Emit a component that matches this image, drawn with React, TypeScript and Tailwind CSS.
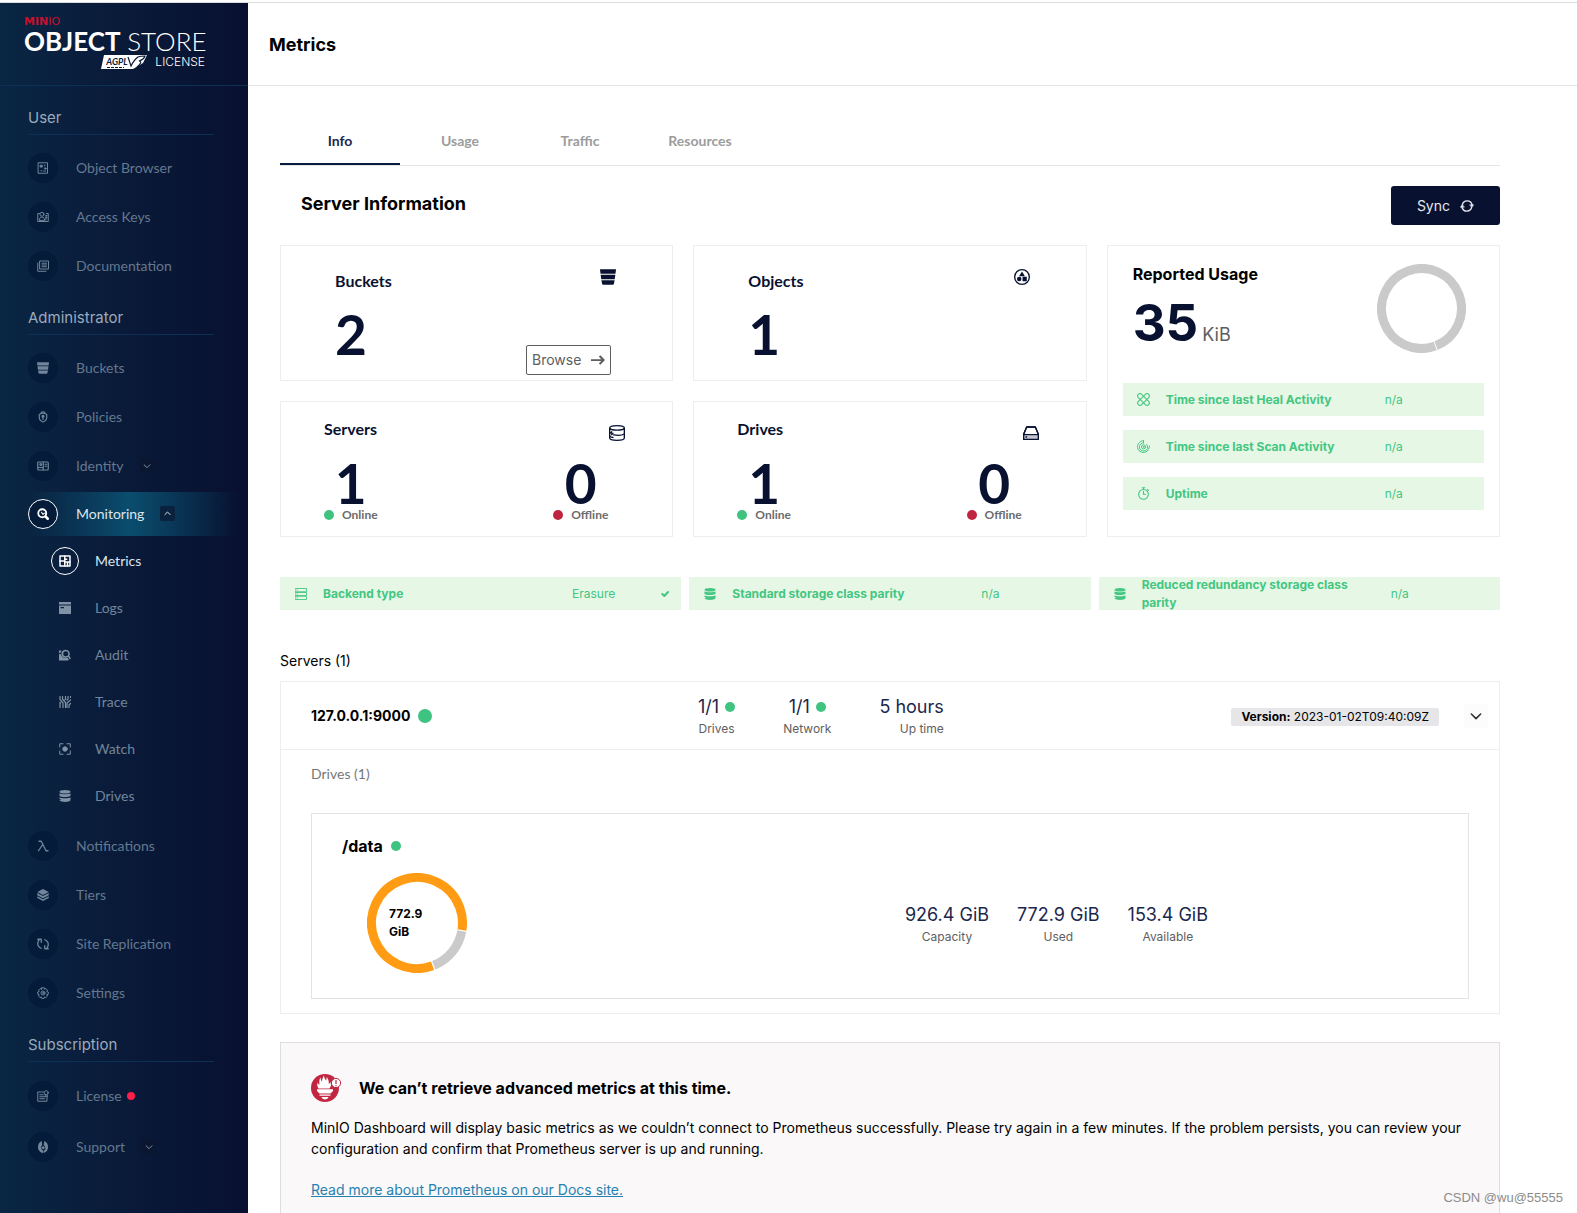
import React from "react";

type IconProps = { className?: string };
type Drawing = (p: IconProps) => React.ReactElement;

const solid = (children: React.ReactNode): Drawing =>
  function SolidIcon({ className }) {
    return (
      <svg viewBox="0 0 24 24" fill="currentColor" aria-hidden="true" className={className}>
        {children}
      </svg>
    );
  };

const line = (children: React.ReactNode, width = 2): Drawing =>
  function LineIcon({ className }) {
    return (
      <svg
        viewBox="0 0 24 24"
        fill="none"
        stroke="currentColor"
        strokeWidth={width}
        strokeLinecap="round"
        strokeLinejoin="round"
        aria-hidden="true"
        className={className}
      >
        {children}
      </svg>
    );
  };

const ObjectBrowserIcon = line(
  <>
    <rect x="3" y="1.5" width="18" height="21" />
    <rect x="7" y="6.5" width="3.6" height="3.6" fill="currentColor" />
    <circle cx="16.5" cy="13" r="1.6" fill="currentColor" />
    <path d="M15.5 6v2M8 17.5h2M13.5 18h3.5" />
  </>,
);
const AccessKeysIcon = line(
  <>
    <path d="M5 5H1.5v16h21V5H19" />
    <circle cx="10" cy="6.5" r="4" />
    <path d="M4.5 18c.4-4 2.800-6 5.500-6s5 2 5.500 6z" />
    <path d="M18 9v9M18 9h2M18 13h2" />
  </>,
);
const DocumentationIcon = line(
  <>
    <rect x="6" y="2" width="17" height="16" />
    <path d="M1.500 6v16.500H18M10 6.500h9M10 10h9M10 13.500h9" />
  </>,
);
const BucketIcon = solid(
  <>
    <path d="M0 .5h24l-.8 6.700H.8z" />
    <path d="M1 8.700h22l-.9 6.600H1.900z" />
    <path d="M2.100 16.800h19.800l-1 5.200c-.2 1-.8 1.500-1.800 1.500H4.900c-1 0-1.600-.5-1.800-1.500z" />
  </>,
);
const PoliciesIcon = line(
  <>
    <path d="M8 4.500C8 1 16 1 16 4.500" />
    <path d="M12 4.500c3 0 5 .8 7.500 2.300v6.200c0 4-2.500 7-7.500 9-5-2-7.500-5-7.500-9V6.800C7 5.300 9 4.500 12 4.500z" />
    <circle cx="12" cy="10.500" r="2" fill="currentColor" />
    <path d="M12 12v5" />
  </>,
  2.4,
);
const IdentityIcon = line(
  <>
    <rect x="1.500" y="4" width="21" height="16" rx="2" />
    <circle cx="7.500" cy="9" r="1.800" />
    <path d="M3 15h9M12.500 4v16M16 8.500h3.500M16 12.500h3.500" />
  </>,
  2.4,
);
const MonitoringIcon = line(
  <>
    <circle cx="10.500" cy="10.500" r="8" />
    <path d="M17 17l4.500 4.500" strokeWidth="5" />
    <path d="M9 8.500l3 4.500 2-2.500h4" strokeWidth="2.200" />
  </>,
  3.6,
);
const MetricsIcon = line(
  <>
    <rect x="2" y="2" width="20" height="20" />
    <path d="M11.500 2v20M2 12h9.500M11.500 14H22M17 14v8M11.500 8.500h4" />
  </>,
  3,
);
const LogsIcon = solid(
  <>
    <path d="M0 0h24v5H0z" />
    <path fillRule="evenodd" d="M0 7h24v17H0zM3 10v2.500h7V10z" />
  </>,
);
const AuditIcon = solid(
  <>
    <path fillRule="evenodd" d="M13.500 1.500a8 8 0 0 1 7 12l3.500 5.500-2.500 1.500-3.500-5a8 8 0 1 1-4.500-14zm0 3a5 5 0 1 0 0 10 5 5 0 0 0 0-10z" />
    <path d="M0 3h4.500v3H3v2H0zM0 10h3.500c.5 3.500 3 6.500 6.500 7.500 2.500.7 5 .4 7-.6l3 4.600-2 1.500H0z" />
  </>,
);
const TraceIcon = line(
  <path d="M2 1v6l6 7v9M2 13v10M2 13l1 1M7 1v5l6 7v10M13 1v5M13 6l-1 1M18 1v5l-2 2M23 1v2M23 8l-7 6v9M23 15l-3 3v5" />,
  2.4,
);
const WatchIcon = line(
  <>
    <path d="M1.500 8V1.500H8M16 1.500h6.500V8M22.500 16v6.500H16M8 22.500H1.500V16" />
    <circle cx="12" cy="12" r="4.500" fill="currentColor" />
  </>,
);
const DrivesIcon = solid(
  <>
    <ellipse cx="12" cy="3.500" rx="11" ry="3.500" />
    <path d="M1 6.500c3 2.500 19 2.500 22 0v5c-2 2.500-14 3.500-18 1.800L1 12z" />
    <path d="M1 14.500c3 2.500 19 2.500 22 0v6c-2 4.500-20 4.500-22 0l4-.8-4-1.700z" />
  </>,
);
const LambdaIcon = line(
  <path d="M4 2.500h4.500L18 21.500h4M11.500 9L3 21.500" />,
  2.6,
);
const TiersIcon = solid(
  <>
    <path d="M12 0l11.500 6L12 12 .5 6z" />
    <path d="M.5 8L12 14l11.500-6v4.500L12 18.500.5 12.500z" />
    <path d="M.5 14.500l11.500 6 11.500-6v3.500L12 24 .5 18z" />
  </>,
);
const ReplicationIcon = line(
  <>
    <path d="M8.500 20.500C3.500 18.500 1.500 15 1.500 11c0-2.500 1-5.500 3-7.500" />
    <path d="M1.500 2.500h7v6" />
    <path d="M15.500 3.500c5 2 7 5.500 7 9.500 0 2.500-1 5.500-3 7.500" />
    <path d="M22.500 21.500h-7v-6" />
  </>,
  2.6,
);
const SettingsIcon = line(
  <>
    <path d="M9.500 1.500h5l.8 3 2.700-1.300 3 3.300-1.500 2.500 3 1v4.500l-3 .8 1.300 3-3.300 3-2.500-1.500-1 3h-4.500l-.8-3-2.700 1.500-3-3.500 1.500-2.500-3-1V10l3-.8L3 6.500l3.300-3.300 2.500 1.500z" />
    <circle cx="12" cy="12" r="4" />
    <circle cx="12" cy="12" r="1" />
  </>,
);
const LicenseIcon = line(
  <>
    <path d="M13 4H1.500v18.500H20V13" />
    <path d="M5.500 9.500h7M5.500 13.500h10M5.500 17.500h10" />
    <circle cx="18.500" cy="5.500" r="4" />
    <path d="M16.500 9.500v4l2-1.300 2 1.300v-4" />
  </>,
);
const SupportIcon = solid(
  <>
    <path d="M9.500 0l1 8L8 11l1.500 6 3 2v5C5 22.500 2 18 2 12 2 6.500 4.500 2 9.500 0z" />
    <path d="M14.500 0C19.500 2 22 6.500 22 12c0 6-2.500 10-8.500 12v-4l3.500-4-1-5-2.500-3z" />
    <circle cx="12.500" cy="13.500" r="2.800" />
  </>,
);
const ChevronDown = line(<path d="M5 9l7 7 7-7" />, 2.4);
const ChevronUp = line(<path d="M5 15l7-7 7 7" />, 2.6);
const ArrowRight = solid(<path d="M0 10.500h17.500l-4-4.500 2.500-2 8 8-8 8-2.500-2 4-4.500H0z" />);
const SyncIcon = line(
  <>
    <path d="M4 10a8.500 8.500 0 0 1 16.500-.5M20 14a8.500 8.500 0 0 1-16.500.5" />
    <path d="M17 10h6.500l-3.200 4zM7 14H.5l3.200-4z" fill="currentColor" strokeWidth="1" />
  </>,
  2.4,
);
const ObjectsIcon = solid(
  <>
    <path fillRule="evenodd" d="M12 0a12 12 0 1 1 0 24 12 12 0 0 1 0-24zm0 2a10 10 0 1 0 0 20 10 10 0 0 0 0-20z" />
    <path d="M12 3.800l4.400 7.200H7.600z" />
    <circle cx="7.800" cy="15" r="3.400" />
    <path d="M12.800 11.800h6.400v6.400h-6.400z" />
  </>,
);
const ServersIcon = line(
  <>
    <path d="M12 1c6 0 11 1 11 3.500v15c0 2.500-5 3.500-11 3.500S1 22 1 19.500v-15C1 2 6 1 12 1z" />
    <path d="M1 5c1 2 5.500 2.600 11 2.600S22 7 23 5M6 12.500c-2 0-4-.5-5-1.500M6 12.500l-2 2M7 14.800c6 1 13 .5 16-1.300M1 16.500c1 1.500 3 2 5 2.200M4 10v.5" />
  </>,
  2,
);
const DiskIcon = line(
  <>
    <path d="M5.500 3h13L23 14v7.500H1V14z" />
    <path d="M2 18h20" strokeWidth="5" stroke="#c3c6d0" />
    <path d="M5.500 3h13L23 14v7.500H1V14zM1 14.500h22M4.500 18h1" />
  </>,
);
const HealIcon = line(
  <>
    <path d="M8.500 2.500l13 13a4.200 4.200 0 0 1-6 6l-13-13a4.200 4.200 0 0 1 6-6z" />
    <path d="M15.500 2.500l-13 13a4.200 4.200 0 0 0 6 6l13-13a4.200 4.200 0 0 0-6-6z" />
  </>,
);
const ScanIcon = line(
  <>
    <path d="M12 1.200A11 11 0 1 0 20.500 19M22.800 11c.2 2.500-.3 4.500-1.300 6M12 1.200v4" />
    <path d="M12 5.200a7.500 7.500 0 1 0 7.500 7.500c0-1.700-.5-3.200-1.500-4.500" />
    <circle cx="12" cy="12.700" r="3.800" />
    <circle cx="12" cy="12.700" r=".8" />
  </>,
  1.8,
);
const UptimeIcon = line(
  <>
    <circle cx="12" cy="13.500" r="9" />
    <path d="M12 8v5.500M12 13.500h4M9.500 1.500h5M12 1.500v3M19 4.500l2 2" />
  </>,
);
const BackendIcon = line(
  <>
    <rect x="1" y="1" width="22" height="6.500" />
    <rect x="1" y="9" width="22" height="6" />
    <rect x="1" y="16.500" width="22" height="6.500" />
    <path d="M4 4.200h1M4 12h1M4 19.800h1" />
  </>,
  1.8,
);
const CheckIcon = line(<path d="M4 12l6 6L21 6" />, 6);
const PrometheusIcon: Drawing = ({ className }) => (
  <svg viewBox="0 0 30 28" aria-hidden="true" className={className}>
    <circle cx="14" cy="14" r="14" fill="#c22742" />
    <g fill="#fff">
      <path d="M7.500 14.500C6 12 6 10 6.500 8.500c.5 1.500 1.500 2.200 2 2C8 7 8.500 5 9.500 3.500c.2 2 .8 3.500 1.500 4C11.200 4.500 12 3 13 1.500c0 2 1 3.500 2 5 .5-1 .7-2 .5-3.500 2 2 2.500 4.500 2.300 7 .7-.3 1.200-1 1.500-2 1.200 2.500.7 4.500-.8 6.500z" />
      <path d="M6 15.300h16v1.700l-2.500 2.500h-11L6 17z" />
      <path d="M8.500 20.500h11v1.200h-11zM10.500 23h7c-.5 1.500-1.700 2.500-3.500 2.500S11 24.500 10.500 23z" />
    </g>
    <circle cx="25" cy="9" r="4.600" fill="#fff" stroke="#c22742" strokeWidth="1" />
    <path d="M25 6v4M25 11.200v1" stroke="#c22742" strokeWidth="1.200" />
  </svg>
);

type NavEntry = {
  label: string;
  icon: Drawing;
  toggle?: boolean;
  badge?: boolean;
};

const userNav: NavEntry[] = [
  { label: "Object Browser", icon: ObjectBrowserIcon },
  { label: "Access Keys", icon: AccessKeysIcon },
  { label: "Documentation", icon: DocumentationIcon },
];
const adminNavTop: NavEntry[] = [
  { label: "Buckets", icon: BucketIcon },
  { label: "Policies", icon: PoliciesIcon },
  { label: "Identity", icon: IdentityIcon, toggle: true },
];
const monitoringNav: NavEntry[] = [
  { label: "Metrics", icon: MetricsIcon },
  { label: "Logs", icon: LogsIcon },
  { label: "Audit", icon: AuditIcon },
  { label: "Trace", icon: TraceIcon },
  { label: "Watch", icon: WatchIcon },
  { label: "Drives", icon: DrivesIcon },
];
const adminNavBottom: NavEntry[] = [
  { label: "Notifications", icon: LambdaIcon },
  { label: "Tiers", icon: TiersIcon },
  { label: "Site Replication", icon: ReplicationIcon },
  { label: "Settings", icon: SettingsIcon },
];
const subscriptionNav: NavEntry[] = [
  { label: "License", icon: LicenseIcon, badge: true },
  { label: "Support", icon: SupportIcon, toggle: true },
];

function NavItem({ item, tall }: { item: NavEntry; tall?: boolean }) {
  const Icon = item.icon;
  const body = (
    <>
      <span className="flex size-[30px] items-center justify-center rounded-full bg-[#041b3a] text-[#71869a]">
        <Icon className="size-3" />
      </span>
      <span className="ml-[18px]">{item.label}</span>
      {item.badge && <span className="ml-[5px] size-2 rounded-full bg-[#ff1f4b]" />}
      {item.toggle && (
        <span className="ml-4 flex size-[15px] items-center justify-center rounded-xs bg-[#0b1630] text-[#8092a5]">
          <ChevronDown className="size-[10px]" />
        </span>
      )}
    </>
  );
  return (
    <li className={tall ? "flex h-[51px]" : "flex h-[49px]"}>
      {item.toggle ? (
        <button type="button" aria-expanded="false" className="flex flex-1 items-center text-left">
          {body}
        </button>
      ) : (
        <a href="#" className="flex flex-1 items-center">
          {body}
        </a>
      )}
    </li>
  );
}

function NavHeading({ children }: { children: React.ReactNode }) {
  return (
    <h2 className="mr-[34px] mb-2 flex h-[45px] items-center border-b border-[#0d3056] pt-3 font-['Inter'] text-[15px] text-[#9aaabc]">
      {children}
    </h2>
  );
}

function Logo() {
  return (
    <div className="flex w-[181px] flex-col font-['Lato'] text-white">
      <span className="font-['DejaVu_Sans'] text-[11px] leading-[10px] text-[#c8102e]">
        <b>MIN</b>IO
      </span>
      <span className="text-[26px] leading-7 whitespace-nowrap">
        <b className="font-bold">OBJECT</b> <span className="font-light">STORE</span>
      </span>
      <span className="flex items-center justify-end gap-2">
        <span className="relative flex h-[14px] w-[46px] items-center">
          <svg viewBox="0 0 46 14" className="absolute inset-0 size-full" aria-hidden="true">
            <path d="M3 0h43l-4 8-10 6H0z" fill="#fff" />
            <path d="M27 2c1 3 2 6 3 9 2-4 4-7 7-9 2-1 5-1 7-1-1 3-3 4-6 5 3 0 2 3-2 6" fill="none" stroke="#0a1b3a" strokeWidth="1.200" />
            <path d="M6 12.500h17" stroke="#0a1b3a" strokeWidth="1" strokeDasharray="3 1" />
          </svg>
          <span className="relative pl-[5px] text-[9px] leading-[10px] font-bold text-[#0a1b3a] italic">AGPL</span>
        </span>
        <span className="font-['Inter'] text-xs leading-[14px] font-light">LICENSE</span>
      </span>
    </div>
  );
}

function Sidebar() {
  return (
    <aside className="flex w-[248px] shrink-0 flex-col bg-[linear-gradient(90deg,#092643_0%,#0a1b3a_45%,#081030_100%)] font-['Lato'] text-[14px] text-[#64788e]">
      <div className="flex h-[83px] shrink-0 items-start border-b border-[#0d3056] pt-[14px] pl-6">
        <Logo />
      </div>
      <nav aria-label="Console" className="flex flex-col pt-1 pl-7">
        <NavHeading>User</NavHeading>
        <ul>
          {userNav.map((item) => (
            <NavItem key={item.label} item={item} />
          ))}
        </ul>
        <NavHeading>Administrator</NavHeading>
        <ul>
          {adminNavTop.map((item) => (
            <NavItem key={item.label} item={item} />
          ))}
          <li className="flex flex-col pb-[2px]">
            <div className="flex h-[47px] items-center pr-[10px]">
              <button
                type="button"
                aria-expanded="true"
                className="flex h-11 flex-1 items-center bg-[linear-gradient(90deg,transparent,#0a4d6e_48%,transparent)] text-left text-[#dde5ec]"
              >
                <span className="flex size-[30px] items-center justify-center rounded-full border border-white bg-[#041b3a] text-white">
                  <MonitoringIcon className="size-3" />
                </span>
                <span className="ml-[18px]">Monitoring</span>
                <span className="ml-4 flex size-[15px] items-center justify-center rounded-xs bg-[#0b223f]">
                  <ChevronUp className="size-[9px]" />
                </span>
              </button>
            </div>
            <ul className="pl-[23px]">
              {monitoringNav.map(({ label, icon: Icon }, i) => (
                <li key={label} className="flex h-[47px]">
                  <a
                    href="#"
                    aria-current={i === 0 ? "page" : undefined}
                    className={i === 0 ? "flex flex-1 items-center text-[#dde5ec]" : "flex flex-1 items-center text-[#71869a]"}
                  >
                    <span
                      className={
                        i === 0
                          ? "flex size-7 items-center justify-center rounded-full border border-white text-white"
                          : "flex size-7 items-center justify-center text-[#8092a5]"
                      }
                    >
                      <Icon className="size-3" />
                    </span>
                    <span className="ml-4">{label}</span>
                  </a>
                </li>
              ))}
            </ul>
          </li>
          {adminNavBottom.map((item) => (
            <NavItem key={item.label} item={item} />
          ))}
        </ul>
        <NavHeading>Subscription</NavHeading>
        <ul>
          {subscriptionNav.map((item) => (
            <NavItem key={item.label} item={item} tall />
          ))}
        </ul>
      </nav>
    </aside>
  );
}

function Dot({ color = "green" }: { color?: "green" | "red" }) {
  return (
    <span
      className={
        color === "green"
          ? "size-[10px] shrink-0 rounded-full bg-[#3fc380]"
          : "size-[10px] shrink-0 rounded-full bg-[#bf2541]"
      }
    />
  );
}

function CountCard({ title, value, icon: Icon, action }: { title: string; value: string; icon: Drawing; action?: React.ReactNode }) {
  return (
    <section className="flex min-h-[136px] justify-between border border-[#eeeeee] pr-14 pl-[54px] text-[#081130]">
      <div className="flex flex-col pt-[23px]">
        <h3 className="font-['Lato'] text-base leading-6 font-bold">{title}</h3>
        <p className="mt-[13px] font-['Lato'] text-[55px] leading-[56px] font-bold">{value}</p>
      </div>
      <div className="flex flex-col items-end justify-between pt-[23px] pb-[5px]">
        <Icon className="size-4" />
        {action}
      </div>
    </section>
  );
}

function StateCard({ title, online, offline, icon: Icon }: { title: string; online: string; offline: string; icon: Drawing }) {
  return (
    <section className="flex min-h-[136px] flex-col border border-[#eeeeee] pt-[15px] pl-[43px] font-['Lato'] text-[#081130]">
      <div className="flex justify-between pr-[47px]">
        <h3 className="text-base leading-6 font-bold">{title}</h3>
        <Icon className="mt-2 size-4" />
      </div>
      <div className="mt-[18px] flex justify-between pr-16">
        <p className="flex flex-col items-center">
          <span className="text-[55px] leading-[48px] font-bold">{online}</span>
          <span className="flex items-center gap-2 text-xs leading-4 font-bold text-[#6b6b6b]">
            <Dot /> Online
          </span>
        </p>
        <p className="flex flex-col items-center">
          <span className="text-[55px] leading-[48px] font-bold">{offline}</span>
          <span className="flex items-center gap-2 text-xs leading-4 font-bold text-[#6b6b6b]">
            <Dot color="red" /> Offline
          </span>
        </p>
      </div>
    </section>
  );
}

function ActivityRow({ icon: Icon, label }: { icon: Drawing; label: string }) {
  return (
    <li className="flex h-[33px] items-center bg-[#e6f7e6] pl-[14px] text-xs text-[#43c681]">
      <Icon className="size-[13px]" />
      <b className="ml-4 w-[219px]">{label}</b>
      <span>n/a</span>
    </li>
  );
}

function BackendRow({ icon: Icon, label, value, ok }: { icon: Drawing; label: string; value: string; ok?: boolean }) {
  return (
    <li className="flex h-[33px] items-center bg-[#e6f7e6] pr-3 pl-[15px] text-xs leading-[18px] text-[#43c681]">
      <Icon className="size-3 shrink-0" />
      <b className="ml-4 w-[249px] pr-8">{label}</b>
      <span className="flex-1">{value}</span>
      {ok && <CheckIcon className="size-2" />}
    </li>
  );
}

function Stat({ value, label, dot, end }: { value: string; label: string; dot?: boolean; end?: boolean }) {
  return (
    <div className={end ? "flex flex-col items-end" : "flex flex-col items-center"}>
      <span className="flex items-center gap-[6px] text-lg leading-6 text-[#1c274c]">
        {value}
        {dot && <Dot />}
      </span>
      <span className="text-xs leading-5 text-[#5e5e5e]">{label}</span>
    </div>
  );
}

const RING_START = 70;

function Ring({ size, slices }: { size: number; slices: { share: number; color: string }[] }) {
  const c = size / 2;
  const r = c - 4.5;
  const length = 2 * Math.PI * r;
  let offset = 0;
  return (
    <svg viewBox={`0 0 ${size} ${size}`} width={size} height={size} aria-hidden="true">
      {slices.map(({ share, color }, i) => {
        const dash = share * length - 1.4;
        const start = RING_START + offset * 360;
        offset += share;
        return (
          <circle
            key={i}
            cx={c}
            cy={c}
            r={r}
            fill="none"
            stroke={color}
            strokeWidth="9"
            strokeDasharray={`${dash} ${length - dash}`}
            transform={`rotate(${start} ${c} ${c})`}
          />
        );
      })}
    </svg>
  );
}

const tabs = ["Info", "Usage", "Traffic", "Resources"];

export default function App() {
  return (
    <div className="relative flex h-screen flex-col overflow-hidden bg-white font-['Inter',sans-serif] text-black">
      <div className="h-[3px] shrink-0 border-b border-[#dcdcdc]" />
      <div className="flex min-h-0 flex-1">
        <Sidebar />
        <div className="flex min-w-0 flex-1 flex-col">
          <header className="flex h-[83px] shrink-0 items-center border-b border-[#e5e5e5] pt-[2px] pl-[21px]">
            <h1 className="text-lg font-bold">Metrics</h1>
          </header>
          <main className="min-h-0 flex-1 overflow-hidden pt-[33px] pr-[77px] pl-8">
            <div role="tablist" aria-label="Metrics" className="flex h-[47px] border-b border-[#e5e5e5] font-['Lato'] text-sm font-bold">
              {tabs.map((tab, i) => (
                <button
                  key={tab}
                  type="button"
                  role="tab"
                  aria-selected={i === 0}
                  className={
                    i === 0
                      ? "h-[46px] w-[120px] border-b-2 border-[#081c42] text-[#1c274c]"
                      : "h-[46px] w-[120px] border-b-2 border-transparent text-[#9c9c9c]"
                  }
                >
                  {tab}
                </button>
              ))}
            </div>

            <div className="mt-5 mb-5 flex items-start justify-between pl-[21px]">
              <h2 className="text-lg leading-9 font-bold">Server Information</h2>
              <button type="button" className="flex h-[39px] items-center gap-[10px] rounded-[3px] bg-[#081130] px-[26px] text-sm text-[#e6e8ee]">
                Sync
                <SyncIcon className="size-[14px]" />
              </button>
            </div>

            <div className="grid grid-cols-3 gap-5">
              <CountCard
                title="Buckets"
                value="2"
                icon={BucketIcon}
                action={
                  <button type="button" className="mr-[5px] flex h-[30px] items-center gap-[10px] rounded-[2px] border border-[#5e5e5e] px-[5px] text-sm text-[#5e5e5e]">
                    Browse
                    <ArrowRight className="size-[14px]" />
                  </button>
                }
              />
              <CountCard title="Objects" value="1" icon={ObjectsIcon} />
              <section className="row-span-2 flex flex-col border border-[#eeeeee] px-[15px] pt-4">
                <div className="flex items-start justify-between pr-[18px] pl-[10px]">
                  <div>
                    <h3 className="text-base leading-6 font-bold">Reported Usage</h3>
                    <p className="mt-[5px] flex items-baseline gap-1 leading-[64px]">
                      <b className="text-[51px] text-[#081130]">35</b>
                      <span className="text-lg leading-6 text-[#5e5e5e]">KiB</span>
                    </p>
                  </div>
                  <div className="pt-[2px]">
                    <Ring size={89} slices={[{ share: 1, color: "#cacaca" }]} />
                  </div>
                </div>
                <ul className="mt-7 flex flex-col gap-[14px]">
                  <ActivityRow icon={HealIcon} label="Time since last Heal Activity" />
                  <ActivityRow icon={ScanIcon} label="Time since last Scan Activity" />
                  <ActivityRow icon={UptimeIcon} label="Uptime" />
                </ul>
              </section>
              <StateCard title="Servers" online="1" offline="0" icon={ServersIcon} />
              <StateCard title="Drives" online="1" offline="0" icon={DiskIcon} />
            </div>

            <ul className="mt-10 grid grid-cols-3 gap-2">
              <BackendRow icon={BackendIcon} label="Backend type" value="Erasure" ok />
              <BackendRow icon={DrivesIcon} label="Standard storage class parity" value="n/a" />
              <BackendRow icon={DrivesIcon} label="Reduced redundancy storage class parity" value="n/a" />
            </ul>

            <h2 className="mt-[41px] text-sm leading-5">Servers (1)</h2>
            <section className="mt-[10px] border border-[#eeeeee]">
              <div className="flex h-[68px] items-center border-b border-[#eeeeee] pr-[11px] pl-[30px]">
                <h3 className="flex w-[387px] items-center gap-2 text-sm font-bold">
                  127.0.0.1:9000 <span className="size-[14px] rounded-full bg-[#3fc380]" />
                </h3>
                <div className="flex flex-1 gap-12 pt-[2px]">
                  <Stat value="1/1" label="Drives" dot />
                  <Stat value="1/1" label="Network" dot />
                  <Stat value="5 hours" label="Up time" end />
                </div>
                <p className="mt-[3px] rounded-xs bg-[#e6e6e8] px-[10px] text-xs leading-[18px]">
                  <b>Version:</b> 2023-01-02T09:40:09Z
                </p>
                <button type="button" aria-label="Collapse server" className="ml-[25px] flex size-6 items-center justify-center bg-[#fcfcfc] text-[#333333]">
                  <ChevronDown className="size-4" />
                </button>
              </div>
              <div className="px-[30px] pt-[14px] pb-[14px]">
                <h4 className="font-['Lato'] text-sm leading-5 text-[#777777]">Drives (1)</h4>
                <article className="mt-[29px] border border-[#e3e3e3] pt-5 pr-[260px] pb-[25px] pl-[30px]">
                  <h5 className="flex items-center gap-2 text-base leading-6 font-bold">
                    /data <Dot />
                  </h5>
                  <div className="mt-[15px] flex items-center justify-between pl-[25px]">
                    <div className="relative">
                      <Ring
                        size={100}
                        slices={[
                          { share: 0.834, color: "#ff9c14" },
                          { share: 0.166, color: "#cacaca" },
                        ]}
                      />
                      <b className="absolute inset-0 flex w-[60px] items-center pl-[22px] text-xs leading-[18px]">772.9 GiB</b>
                    </div>
                    <div className="flex gap-7 pt-1">
                      <Stat value="926.4 GiB" label="Capacity" />
                      <Stat value="772.9 GiB" label="Used" />
                      <Stat value="153.4 GiB" label="Available" />
                    </div>
                  </div>
                </article>
              </div>
            </section>

            <section className="mt-7 border border-[#dedede] bg-[#faf8f9] px-[30px] pt-[31px] pb-10">
              <h2 className="flex items-center gap-[18px] text-base leading-7 font-bold">
                <PrometheusIcon className="h-7 w-[30px]" />
                We can’t retrieve advanced metrics at this time.
              </h2>
              <p className="mt-[15px] text-sm leading-[21px]">
                MinIO Dashboard will display basic metrics as we couldn’t connect to Prometheus successfully. Please try again in a few minutes. If the problem persists, you can review your configuration and confirm that Prometheus server is up and running.
              </p>
              <a href="#" className="mt-5 inline-block text-sm leading-[21px] text-[#2781b0] underline">
                Read more about Prometheus on our Docs site.
              </a>
            </section>
          </main>
        </div>
      </div>
      <span className="absolute right-[14px] bottom-[7px] font-['Liberation_Sans'] text-[13px] leading-4 text-[#8c8c8c]">CSDN @wu@55555</span>
    </div>
  );
}
